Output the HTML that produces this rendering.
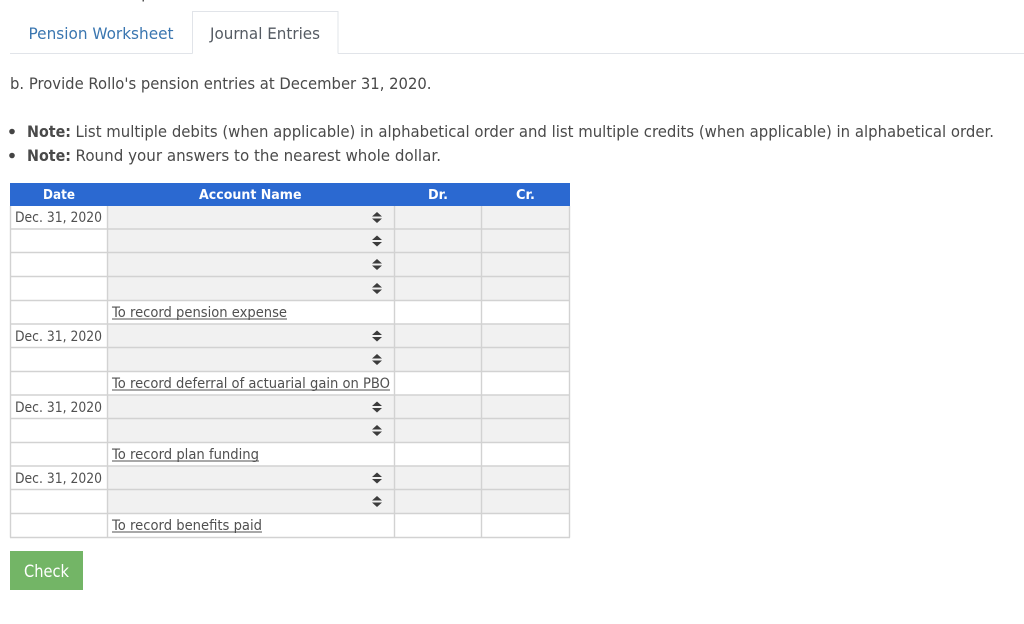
<!DOCTYPE html>
<html lang="en"><head><meta charset="utf-8"><title>Journal Entries</title>
<style>
html,body{margin:0;padding:0;background:#fff;width:1024px;height:624px;overflow:hidden}
svg{display:block}
text{font-family:"DejaVu Sans","Liberation Sans",sans-serif;fill:#4a4a4a;white-space:pre}
.b{font-weight:bold}
.h{font-weight:bold;fill:#fff;font-size:13.5px}
.c{font-size:14px;fill:#505050}
.l{stroke:#d2d2d2;stroke-width:1.4}
</style></head><body>
<svg width="1024" height="624" viewBox="0 0 1024 624" xmlns="http://www.w3.org/2000/svg">
<rect x="142.5" y="0" width="1.5" height="1.5" fill="#555"/>
<!-- tabs -->
<path d="M10 53.5H192.5M338 53.5H1024" stroke="#e1e4e9" stroke-width="1" fill="none"/>
<path d="M192.5 53.5V11.5H338V53.5" stroke="#e1e4e9" stroke-width="1" fill="#fff"/>
<text x="28.5" y="39" font-size="16" textLength="145" lengthAdjust="spacingAndGlyphs" style="fill:#3a76b0">Pension Worksheet</text>
<text x="210" y="39" font-size="16" textLength="110" lengthAdjust="spacingAndGlyphs" style="fill:#555b63">Journal Entries</text>
<!-- intro -->
<text x="10" y="89" font-size="16" textLength="421.5" lengthAdjust="spacingAndGlyphs">b. Provide Rollo's pension entries at December 31, 2020.</text>
<circle cx="12" cy="131.5" r="2.8" fill="#444"/>
<text x="27" y="137" font-size="16" class="b" textLength="44" lengthAdjust="spacingAndGlyphs">Note:</text>
<text x="75.5" y="137" font-size="16" textLength="918.5" lengthAdjust="spacingAndGlyphs">List multiple debits (when applicable) in alphabetical order and list multiple credits (when applicable) in alphabetical order.</text>
<circle cx="12" cy="155.5" r="2.8" fill="#444"/>
<text x="27" y="161" font-size="16" class="b" textLength="44" lengthAdjust="spacingAndGlyphs">Note:</text>
<text x="75.5" y="161" font-size="16" textLength="365.5" lengthAdjust="spacingAndGlyphs">Round your answers to the nearest whole dollar.</text>
<!-- table header -->
<rect x="10" y="183" width="560" height="23" fill="#2b69d1"/>
<text x="43" y="199" class="h" textLength="32" lengthAdjust="spacingAndGlyphs">Date</text>
<text x="199" y="199" class="h" textLength="102.5" lengthAdjust="spacingAndGlyphs">Account Name</text>
<text x="428" y="199" class="h" textLength="20" lengthAdjust="spacingAndGlyphs">Dr.</text>
<text x="516" y="199" class="h" textLength="19" lengthAdjust="spacingAndGlyphs">Cr.</text>
<!-- gray cell rows -->
<g fill="#f1f1f1">
<rect x="107" y="206" width="462" height="94"/>
<rect x="107" y="324" width="462" height="47"/>
<rect x="107" y="395" width="462" height="47"/>
<rect x="107" y="466" width="462" height="47"/>
</g>
<!-- grid -->
<g class="l">
<path class="l" d="M10.5 206V537.5M107.5 206V537.5M394.5 206V537.5M481.5 206V537.5M569.5 206V537.5"/>
<path class="l" d="M10 229H570M10 252.5H570M10 276.5H570M10 300.5H570M10 324H570M10 347.5H570M10 371.5H570M10 395H570M10 418.5H570M10 442.5H570M10 466H570M10 489.5H570M10 513.5H570M10 537.5H570"/>
</g>
<!-- dates -->
<text x="15" y="222" class="c" textLength="87" lengthAdjust="spacingAndGlyphs">Dec. 31, 2020</text>
<text x="15" y="341" class="c" textLength="87" lengthAdjust="spacingAndGlyphs">Dec. 31, 2020</text>
<text x="15" y="412" class="c" textLength="87" lengthAdjust="spacingAndGlyphs">Dec. 31, 2020</text>
<text x="15" y="483" class="c" textLength="87" lengthAdjust="spacingAndGlyphs">Dec. 31, 2020</text>
<!-- memo lines -->
<text x="112" y="317" class="c" textLength="175" lengthAdjust="spacingAndGlyphs">To record pension expense</text>
<rect x="112" y="318.5" width="175" height="1" fill="#505050"/>
<text x="112" y="388" class="c" textLength="278" lengthAdjust="spacingAndGlyphs">To record deferral of actuarial gain on PBO</text>
<rect x="112" y="389.5" width="278" height="1" fill="#505050"/>
<text x="112" y="459" class="c" textLength="147" lengthAdjust="spacingAndGlyphs">To record plan funding</text>
<rect x="112" y="460.5" width="147" height="1" fill="#505050"/>
<text x="112" y="530" class="c" textLength="150" lengthAdjust="spacingAndGlyphs">To record benefits paid</text>
<rect x="112" y="531.5" width="150" height="1" fill="#505050"/>
<!-- select arrows -->
<g fill="#3c3c3c">
<path d="M372 216.5H382L377 212ZM372 218.5H382L377 223Z"/>
<path d="M372 240H382L377 235.5ZM372 242H382L377 246.5Z"/>
<path d="M372 263.5H382L377 259ZM372 265.5H382L377 270Z"/>
<path d="M372 287.5H382L377 283ZM372 289.5H382L377 294Z"/>
<path d="M372 335H382L377 330.5ZM372 337H382L377 341.5Z"/>
<path d="M372 358.5H382L377 354ZM372 360.5H382L377 365Z"/>
<path d="M372 406H382L377 401.5ZM372 408H382L377 412.5Z"/>
<path d="M372 429.5H382L377 425ZM372 431.5H382L377 436Z"/>
<path d="M372 477H382L377 472.5ZM372 479H382L377 483.5Z"/>
<path d="M372 500.5H382L377 496ZM372 502.5H382L377 507Z"/>
</g>
<!-- button -->
<rect x="10" y="551" width="73" height="39" fill="#73b566"/>
<text x="24" y="577" font-size="16.5" textLength="45" lengthAdjust="spacingAndGlyphs" style="fill:#fff">Check</text>
</svg>
</body></html>
